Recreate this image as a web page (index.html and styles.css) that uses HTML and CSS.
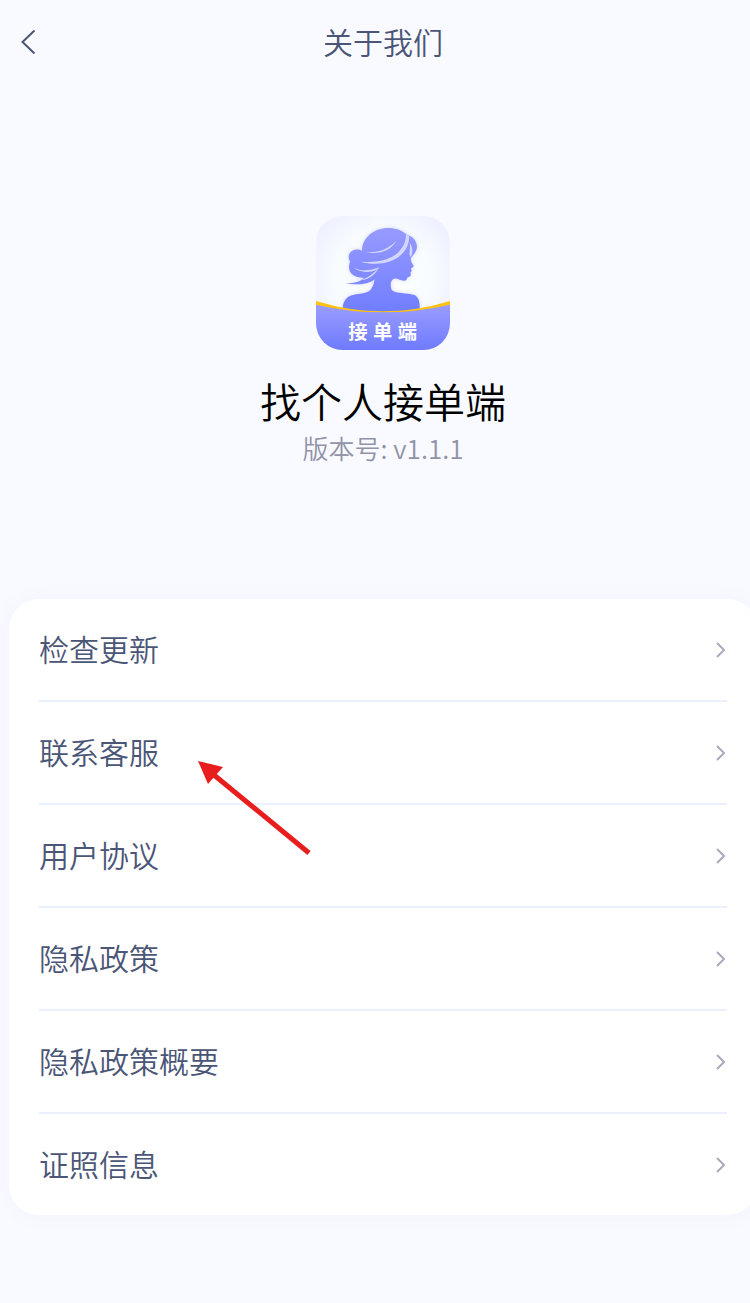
FILE: index.html
```
<!DOCTYPE html>
<html lang="zh">
<head>
    <meta charset="UTF-8">
    <meta name="viewport" content="width=device-width, initial-scale=1.0">
    <title>关于我们</title>
    <link rel="stylesheet" href="styles.css">
</head>
<body>
    <div class="page">
        <header>
            <button class="back" type="button" aria-label="返回">
                <svg width="16" height="26" viewBox="0 0 16 26"><path d="M14.500 2.500L2.500 14L14.500 25.500"/></svg>
            </button>
            <h1>关于我们</h1>
        </header>
        <main>
            <section class="app">
                <svg class="logo" viewBox="0 0 402 402" role="img" aria-label="接单端">
                    <defs>
                        <radialGradient id="bg" cx="0.5" cy="0.45" r="0.65">
                            <stop offset="0" stop-color="#ffffff"/>
                            <stop offset="0.55" stop-color="#f8fcff"/>
                            <stop offset="1" stop-color="#ebedff"/>
                        </radialGradient>
                        <linearGradient id="hair" x1="0" y1="0" x2="0" y2="1">
                            <stop offset="0" stop-color="#979aff"/>
                            <stop offset="1" stop-color="#6f7dff"/>
                        </linearGradient>
                        <linearGradient id="band" x1="0" y1="0" x2="0" y2="1">
                            <stop offset="0" stop-color="#9a9cff"/>
                            <stop offset="1" stop-color="#6e7bff"/>
                        </linearGradient>
                        <filter id="glow" x="-20%" y="-20%" width="140%" height="140%">
                            <feGaussianBlur stdDeviation="6"/>
                        </filter>
                        <clipPath id="box"><rect width="402" height="402" rx="80"/></clipPath>
                        <path id="lady" d="M80 296V280C80 262 87 246 103 239C125 231 151 235 164 221C171 213 174 201 176 190C158 205 125 209 88 201C116 203 134 196 144 186C114 184 99 173 99 153C100 145 101 140 103 136C94 127 97 105 116 101C124 99 131 101 138 104C139 64 174 36 217 36C239 36 257 43 270 54L281 60C295 66 303 78 303 94C301 109 291 117 285 126C283 132 287 141 292 148C294 152 290 155 285 157C288 164 286 168 283 170C286 178 284 182 277 183C272 184 275 192 267 194C252 194 241 183 232 189C222 196 223 209 227 222C240 235 272 229 295 237C309 244 312 259 311 280V296Z"/>
                    </defs>
                    <g clip-path="url(#box)">
                        <rect width="402" height="402" fill="url(#bg)"/>
                        <use href="#lady" fill="#b9bfff" opacity="0.6" filter="url(#glow)"/>
                        <use href="#lady" fill="url(#hair)"/>
                        <g fill="#d3d7ff">
                            <path d="M270 54L279 60C281 97 253 132 205 141C180 145 158 144 133 137C180 140 211 134 237 117C260 101 270 78 270 54Z"/>
                            <path d="M241 74C226 101 197 116 148 109C194 109 216 99 241 74Z"/>
                            <path d="M113 155C136 165 158 166 190 154C176 172 139 173 113 155Z"/>
                            <path d="M190 154C177 178 157 192 136 192C158 184 172 173 190 154Z"/>
                            <path d="M281 80C292 96 291 111 284 124C277 114 284 101 281 80Z"/>
                        </g>
                        <path d="M0 255Q200 317 402 255V290H0Z" fill="#ffc20e"/>
                        <path d="M0 266Q200 312 402 266V402H0Z" fill="url(#band)"/>
                        <text class="logo-text" x="97 171 245" y="368">接单端</text>
                    </g>
                </svg>
                <h2>找个人接单端</h2>
                <p class="version">版本号: v1.1.1</p>
            </section>
            <nav class="menu">
                <ul>
                    <li><a href="#">检查更新<svg class="more" viewBox="0 0 12 18"><path d="M2 3L9 10L2 17"/></svg></a></li>
                    <li>
                        <a href="#">联系客服<svg class="more" viewBox="0 0 12 18"><path d="M2 3L9 10L2 17"/></svg></a>
                        <!-- 红色指示箭头 -->
                        <svg class="pointer" viewBox="0 0 114 96">
                            <path d="M16 14L111 92" stroke="#e81e1e" stroke-width="5"/>
                            <path d="M0 0L25 6L10 23Z" fill="#e81e1e"/>
                        </svg>
                    </li>
                    <li><a href="#">用户协议<svg class="more" viewBox="0 0 12 18"><path d="M2 3L9 10L2 17"/></svg></a></li>
                    <li><a href="#">隐私政策<svg class="more" viewBox="0 0 12 18"><path d="M2 3L9 10L2 17"/></svg></a></li>
                    <li><a href="#">隐私政策概要<svg class="more" viewBox="0 0 12 18"><path d="M2 3L9 10L2 17"/></svg></a></li>
                    <li><a href="#">证照信息<svg class="more" viewBox="0 0 12 18"><path d="M2 3L9 10L2 17"/></svg></a></li>
                </ul>
            </nav>
        </main>
    </div>
</body>
</html>
```
FILE: styles.css
```
/* 基础样式 */
* {
    box-sizing: border-box;
}

body {
    font-family: "Noto Sans CJK SC", sans-serif;
    font-weight: 350;
    margin: 0;
    background-color: #f9faff;
    color: #4b5677;
    min-height: 100vh;
    overflow-x: hidden;
}

h1, h2, p, ul {
    margin: 0;
    padding: 0;
    font-weight: inherit;
}

/* 页面比窗口略宽，右侧溢出 */
.page {
    width: calc(100% + 16px);
}

/* 顶栏 */
header {
    display: grid;
    grid-template-columns: 60px 1fr 60px;
    align-items: center;
    padding: 19px 0 21px;
}

header h1 {
    font-size: 30px;
    line-height: 44px;
    text-align: center;
}

.back {
    display: flex;
    padding: 9px 20px;
    border: none;
    background: none;
    cursor: pointer;
}

.back path {
    fill: none;
    stroke: #4b5677;
    stroke-width: 2;
}

/* 应用信息 */
.app {
    display: flex;
    flex-direction: column;
    align-items: center;
    padding: 132px 0 133px;
}

.logo {
    width: 134px;
    height: 134px;
    margin-bottom: 20px;
}

.logo-text {
    font-size: 58px;
    font-weight: 700;
    fill: #fff;
}

.app h2 {
    color: #000;
    font-size: 41px;
    line-height: 60px;
}

.version {
    color: #9193a8;
    font-size: 26px;
    line-height: 36px;
}

/* 菜单列表 */
.menu {
    margin: 0 9px;
    padding: 0 30px;
    background-color: #fff;
    border-radius: 30px;
    box-shadow: 0 0 20px rgba(100, 120, 230, 0.05);
}

.menu ul {
    list-style: none;
}

.menu li {
    position: relative;
    border-bottom: 2px solid #ebf0ff;
}

.menu li:last-child {
    border-bottom: none;
}

.menu a {
    display: flex;
    justify-content: space-between;
    align-items: center;
    padding: 27px 0 29px;
    color: #4b5677;
    font-size: 30px;
    line-height: 45px;
    text-decoration: none;
}

.more {
    width: 12px;
    height: 18px;
    fill: none;
    stroke: #a9abbc;
    stroke-width: 2;
}

.pointer {
    position: absolute;
    left: 159px;
    top: 59px;
    width: 114px;
    height: 96px;
    z-index: 1;
    pointer-events: none;
}
```
